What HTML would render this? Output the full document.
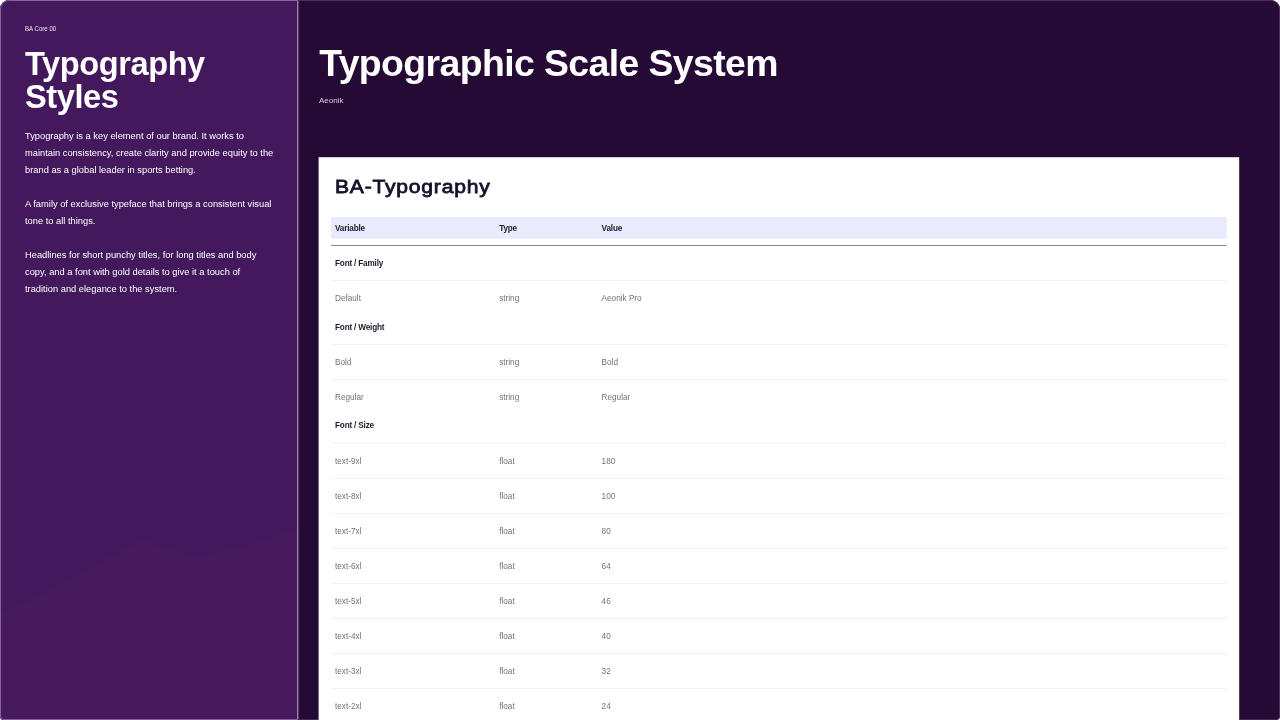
<!DOCTYPE html>
<html lang="en">
<head>
<meta charset="utf-8">
<title>Typography Styles</title>
<style>
html,body{margin:0;padding:0;background:#fff;}
body{width:1280px;height:720px;overflow:hidden;position:relative;font-family:"Liberation Sans",Arial,sans-serif;}
.frame{will-change:transform;position:absolute;left:0;top:0;width:1280px;height:720px;border-radius:9px 9px 4px 4px;overflow:hidden;background:#240a34;}
.left{position:absolute;left:0;top:0;width:297px;height:720px;background:#44185c;overflow:hidden;}
.divider{position:absolute;left:297px;top:0;width:2px;height:720px;background:linear-gradient(90deg,#9880a8 0,#9880a8 1px,#5a4169 1px,#5a4169 2px);}
.edgeL{position:absolute;left:0;top:0;width:298px;height:720px;box-sizing:border-box;border-radius:9px 0 0 4px;border:1px solid #866096;border-right:0;pointer-events:none;}
.edgeR{position:absolute;left:298px;top:0;width:982px;height:720px;box-sizing:border-box;border-radius:0 9px 4px 0;border:1px solid #4b2f58;border-left:0;border-bottom-color:#43284f;pointer-events:none;}
.wave{position:absolute;left:0;top:500px;width:297px;height:220px;overflow:visible;filter:blur(2.5px);}
.kicker{position:absolute;left:25px;top:24.6px;font-size:6.9px;line-height:8px;color:#efe6f4;white-space:nowrap;transform:scaleX(0.885);transform-origin:0 0;}
h1{position:absolute;left:25px;top:47.1px;margin:0;font-size:32.6px;line-height:33.3px;font-weight:700;color:#fff;letter-spacing:-0.42px;white-space:nowrap;}
.p{position:absolute;left:25px;margin:0;font-size:9.32px;line-height:17.05px;color:#fff;white-space:nowrap;}
h2{position:absolute;left:319.2px;top:42px;margin:0;font-size:37.4px;line-height:42px;font-weight:700;color:#fff;letter-spacing:-0.6px;white-space:nowrap;}
.sub{position:absolute;left:319px;top:96px;font-size:8px;line-height:9px;color:#d9cfe0;white-space:nowrap;}
.title{position:absolute;left:335px;top:173.7px;margin:0;font-size:19.2px;line-height:26px;font-weight:400;-webkit-text-stroke:0.8px #1a1029;color:#1a1029;transform:scaleX(1.1);transform-origin:0 0;letter-spacing:0.7px;white-space:nowrap;}
.lines{position:absolute;left:0;top:0;}
.row{position:absolute;left:0;width:1280px;height:0;font-size:8.2px;line-height:0;white-space:nowrap;color:#737373;transform:translateY(-1.7px);}
.row span{position:absolute;top:0;}
.row .c1{left:335px;}
.row .c2{left:499.2px;}
.row .c3{left:601.6px;}
.row.head,.row.group{font-weight:700;color:#1d1a2b;letter-spacing:-0.18px;}
</style>
</head>
<body>
<div class="frame">
<div class="left"><svg class="wave" width="297" height="220" viewBox="0 0 297 220"><path d="M0 112 C50 92 95 62 142 39 C165 46 180 52 200 55 C235 48 270 38 297 27 L330 27 L330 250 L-30 250 L-30 112 Z" fill="#ffffff" fill-opacity="0.013"/></svg></div>
<div class="divider"></div>
<div class="kicker">BA Core 00</div>
<h1>Typography<br>Styles</h1>
<p class="p" style="top:127.5px">Typography is a key element of our brand. It works to<br>maintain consistency, create clarity and provide equity to the<br>brand as a global leader in sports betting.</p>
<p class="p" style="top:195.5px">A family of exclusive typeface that brings a consistent visual<br>tone to all things.</p>
<p class="p" style="top:246.5px">Headlines for short punchy titles, for long titles and body<br>copy, and a font with gold details to give it a touch of<br>tradition and elegance to the system.</p>
<div class="edgeL"></div>
<div class="edgeR"></div>
<h2>Typographic Scale System</h2>
<div class="sub">Aeonik</div>
<svg class="lines" width="1280" height="720" viewBox="0 0 1280 720"><rect x="318.6" y="157.2" width="920.6" height="570" fill="#fff"/><rect x="331" y="217" width="895.8" height="21.6" fill="#e9ebfd"/><rect x="331" y="245" width="895.8" height="1" fill="#86868d"/><rect x="331" y="280" width="895.8" height="1" fill="#f2f2f2"/><rect x="331" y="344" width="895.8" height="1" fill="#f2f2f2"/><rect x="331" y="379" width="895.8" height="1" fill="#f2f2f2"/><rect x="331" y="442.5" width="895.8" height="1" fill="#f2f2f2"/><rect x="331" y="478" width="895.8" height="1" fill="#f2f2f2"/><rect x="331" y="513" width="895.8" height="1" fill="#f2f2f2"/><rect x="331" y="548" width="895.8" height="1" fill="#f2f2f2"/><rect x="331" y="583" width="895.8" height="1" fill="#f2f2f2"/><rect x="331" y="618" width="895.8" height="1" fill="#f2f2f2"/><rect x="331" y="653" width="895.8" height="1" fill="#f2f2f2"/><rect x="331" y="688" width="895.8" height="1" fill="#f2f2f2"/></svg>
<div class="row head" style="top:231px"><span class="c1">Variable</span><span class="c2">Type</span><span class="c3">Value</span></div>
<div class="row group" style="top:266px"><span class="c1">Font / Family</span></div>
<div class="row" style="top:301px"><span class="c1">Default</span><span class="c2">string</span><span class="c3">Aeonik Pro</span></div>
<div class="row group" style="top:330px"><span class="c1">Font / Weight</span></div>
<div class="row" style="top:365px"><span class="c1">Bold</span><span class="c2">string</span><span class="c3">Bold</span></div>
<div class="row" style="top:400px"><span class="c1">Regular</span><span class="c2">string</span><span class="c3">Regular</span></div>
<div class="row group" style="top:428px"><span class="c1">Font / Size</span></div>
<div class="row" style="top:464px"><span class="c1">text-9xl</span><span class="c2">float</span><span class="c3">180</span></div>
<div class="row" style="top:499px"><span class="c1">text-8xl</span><span class="c2">float</span><span class="c3">100</span></div>
<div class="row" style="top:534px"><span class="c1">text-7xl</span><span class="c2">float</span><span class="c3">80</span></div>
<div class="row" style="top:569px"><span class="c1">text-6xl</span><span class="c2">float</span><span class="c3">64</span></div>
<div class="row" style="top:604px"><span class="c1">text-5xl</span><span class="c2">float</span><span class="c3">46</span></div>
<div class="row" style="top:639px"><span class="c1">text-4xl</span><span class="c2">float</span><span class="c3">40</span></div>
<div class="row" style="top:674px"><span class="c1">text-3xl</span><span class="c2">float</span><span class="c3">32</span></div>
<div class="row" style="top:709px"><span class="c1">text-2xl</span><span class="c2">float</span><span class="c3">24</span></div>
<div class="title">BA-Typography</div>
</div>
</body>
</html>
